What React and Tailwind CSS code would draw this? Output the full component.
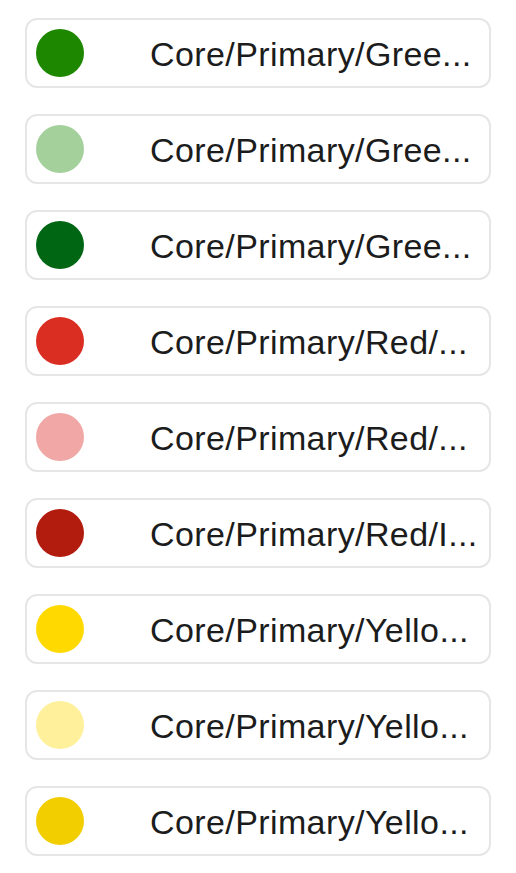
const items = [
  { color: "#1e8700", label: "Core/Primary/Gree..." },
  { color: "#a4d09c", label: "Core/Primary/Gree..." },
  { color: "#006614", label: "Core/Primary/Gree..." },
  { color: "#db2e22", label: "Core/Primary/Red/..." },
  { color: "#f0a7a5", label: "Core/Primary/Red/..." },
  { color: "#b11c0f", label: "Core/Primary/Red/I..." },
  { color: "#ffd900", label: "Core/Primary/Yello..." },
  { color: "#fff09c", label: "Core/Primary/Yello..." },
  { color: "#f2cd00", label: "Core/Primary/Yello..." },
];

export default function App() {
  return (
    <div className="w-[516px] h-[873px] bg-white pl-[25px] pt-[18px] flex flex-col gap-[26px] overflow-hidden">
      {items.map((it, i) => (
        <div
          key={i}
          className="w-[466px] h-[70px] shrink-0 border-2 border-[#e6e6e6] rounded-[12px] flex items-center pl-[9px]"
        >
          <div className="w-12 h-12 rounded-full shrink-0" style={{ backgroundColor: it.color }} />
          <span
            className="ml-[66px] mt-[1px] text-[34px] leading-none tracking-[0.4px] whitespace-nowrap text-[#1c1c1c]"
            style={{ fontFamily: '"Liberation Sans", Arial, sans-serif' }}
          >
            {it.label}
          </span>
        </div>
      ))}
    </div>
  );
}
